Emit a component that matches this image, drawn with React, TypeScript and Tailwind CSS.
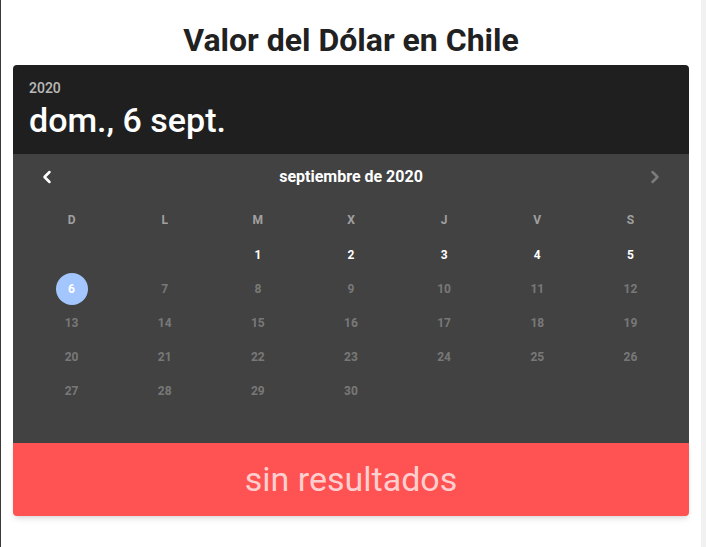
import { ChevronLeft, ChevronRight } from "lucide-react";

const weekdays = ["D", "L", "M", "X", "J", "V", "S"];

// septiembre 2020 empieza en martes
const days: (number | null)[] = [
  null,
  null,
  ...Array.from({ length: 30 }, (_, i) => i + 1),
];

function DayCell({ day }: { day: number | null }) {
  if (day === null) return <div className="h-[34px]" />;

  if (day === 6) {
    return (
      <div className="h-[34px] flex items-center justify-center">
        <div className="w-8 h-8 rounded-full bg-[#a4c6ff] flex items-center justify-center text-xs font-bold text-white">
          {day}
        </div>
      </div>
    );
  }

  const enabled = day <= 5;
  return (
    <div
      className={
        enabled
          ? "h-[34px] flex items-center justify-center text-xs font-bold text-white"
          : "h-[34px] flex items-center justify-center text-xs font-bold text-white/30"
      }
    >
      {day}
    </div>
  );
}

export default function App() {
  return (
    <div
      className="flex min-h-[547px] bg-white"
      style={{ fontFamily: "Roboto, 'Liberation Sans', sans-serif" }}
    >
      <div className="w-px bg-[#3a3a3a]" />

      <div className="flex-1 px-3">
        <h1 className="pt-[22px] pb-[7px] text-center text-[32px] leading-[36px] font-bold text-[#212121]">
          Valor del Dólar en Chile
        </h1>

        {/* Date picker */}
        <div className="rounded-t overflow-hidden">
          <div className="bg-[#1f1f1f] px-4 pt-[13px] pb-[12px]">
            <div className="text-sm leading-5 font-medium text-white/70">
              2020
            </div>
            <div className="text-[34px] leading-[44px] font-medium text-white">
              dom., 6 sept.
            </div>
          </div>

          <div className="bg-[#424242] px-3 pt-[9px] pb-[35px]">
            <div className="flex items-center justify-between px-[12px] h-[28px]">
              <ChevronLeft className="w-5 h-5 text-white" strokeWidth={3} />
              <span className="text-base font-bold text-white">
                septiembre de 2020
              </span>
              <ChevronRight className="w-5 h-5 text-white/30" strokeWidth={3} />
            </div>

            <div className="grid grid-cols-7 mt-[19px]">
              {weekdays.map((d) => (
                <div
                  key={d}
                  className="h-[20px] flex items-center justify-center text-xs font-bold text-white/50"
                >
                  {d}
                </div>
              ))}
            </div>

            <div className="grid grid-cols-7 pt-[8px]">
              {days.map((d, i) => (
                <DayCell key={i} day={d} />
              ))}
            </div>
          </div>
        </div>

        {/* Resultado */}
        <div className="bg-[#ff5252] rounded-b h-[73px] flex items-center justify-center shadow-md">
          <span className="text-[34px] text-[#ffcfcf]">sin resultados</span>
        </div>
      </div>

      <div className="w-[5px] bg-[#f1f1f1]" />
    </div>
  );
}
